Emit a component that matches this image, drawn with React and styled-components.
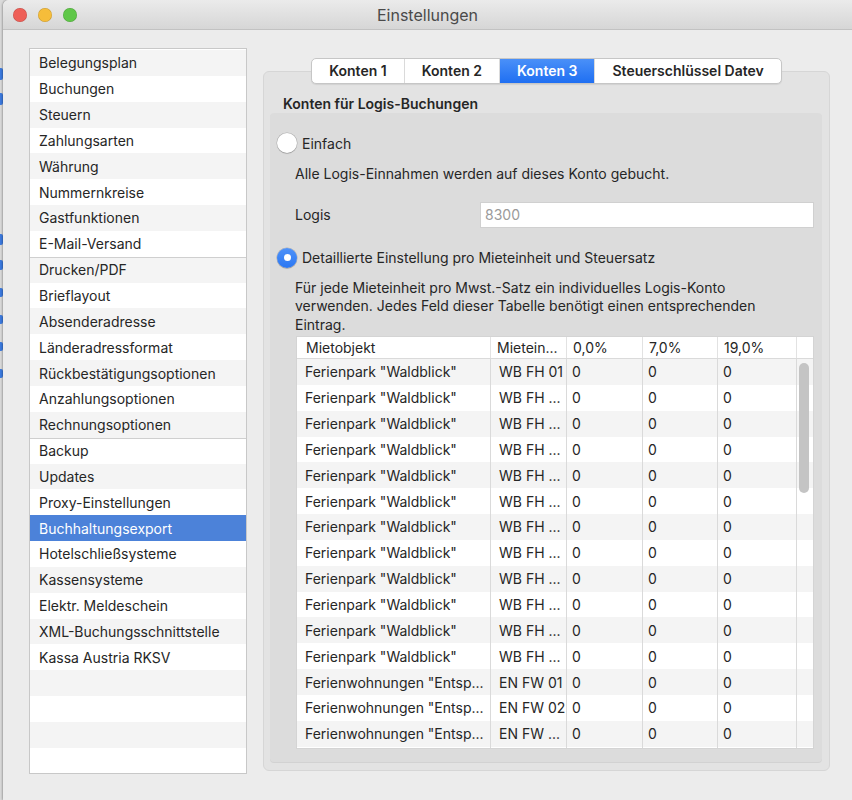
import React from "react";
import styled, { createGlobalStyle } from "styled-components";

const GlobalStyle = createGlobalStyle`
  html, body {
    margin: 0;
    padding: 0;
  }
  body {
    width: 852px;
    height: 800px;
    overflow: hidden;
    background: #d6d6d6;
    font-family: Inter, "Noto Sans", "Liberation Sans", sans-serif;
    font-size: 14px;
    color: #262626;
  }
`;

const Screen = styled.div`
  display: flex;
  height: 800px;
`;

// window behind, only a sliver is visible
const Backdrop = styled.div`
  width: 3px;
  display: flex;
  flex-direction: column;
  background: #dadada;
`;

const Mark = styled.div`
  height: ${(p) => p.$h}px;
  margin-top: ${(p) => p.$top}px;
  background: #3c7be0;
  border-radius: 0 2px 2px 0;
`;

const Window = styled.div`
  flex: 1;
  display: flex;
  flex-direction: column;
  background: #ececec;
  border-top-left-radius: 6px;
  overflow: hidden;
  box-shadow: -1px 0 2px rgba(0, 0, 0, 0.25);
`;

const TitleBar = styled.div`
  height: 30px;
  flex-shrink: 0;
  display: grid;
  grid-template-columns: 1fr auto 1fr;
  align-items: center;
  background: linear-gradient(#ebebeb, #d6d6d6);
  border-bottom: 1px solid #c2c2c2;
  box-sizing: border-box;
`;

const Lights = styled.div`
  display: flex;
  gap: 11px;
  padding-left: 10px;
`;

const Light = styled.span`
  width: 14px;
  height: 14px;
  border-radius: 50%;
  background: ${(p) => p.$color};
  box-shadow: inset 0 0 0 0.5px rgba(0, 0, 0, 0.18);
`;

const Title = styled.div`
  font-size: 16px;
  color: #4a4a4a;
`;

const Body = styled.div`
  flex: 1;
  min-height: 0;
  display: flex;
  gap: 16px;
  padding: 18px 22px 0 26px;
`;

const Sidebar = styled.div`
  width: 218px;
  height: 726px;
  box-sizing: border-box;
  border: 1px solid #c8c8c8;
  background: #fff;
  overflow: hidden;
  display: flex;
  flex-direction: column;
  padding-top: 1px;
`;

const SideItem = styled.div`
  height: 25.85px;
  flex-shrink: 0;
  display: flex;
  align-items: center;
  padding-left: 9px;
  white-space: nowrap;
  color: ${(p) => (p.$selected ? "#fff" : "#262626")};
  background: ${(p) =>
    p.$selected ? "#4c82d9" : p.$striped ? "#f4f4f4" : "#fff"};
  box-shadow: ${(p) => (p.$groupStart ? "inset 0 1px 0 #cfcfcf" : "none")};
`;

const Main = styled.div`
  flex: 1;
  min-height: 0;
  display: flex;
  flex-direction: column;
  padding: 10px 0 29px;
`;

const Tabs = styled.div`
  align-self: center;
  display: flex;
  height: 26px;
  flex-shrink: 0;
  box-sizing: border-box;
  border: 1px solid #c6c6c6;
  border-radius: 5px;
  background: #fff;
  box-shadow: 0 1px 1px rgba(0, 0, 0, 0.08);
  overflow: hidden;
  position: relative;
  z-index: 1;
`;

const Tab = styled.div`
  display: flex;
  align-items: center;
  padding: 0 17px 1px;
  font-weight: 600;
  color: ${(p) => (p.$active ? "#fff" : "#262626")};
  background: ${(p) =>
    p.$active ? "linear-gradient(#4a90f8, #1f6ff2)" : "transparent"};
  & + & {
    border-left: 1px solid #dadada;
  }
`;

const TabBox = styled.div`
  flex: 1;
  min-height: 0;
  margin-top: -13px;
  display: flex;
  flex-direction: column;
  background: #e3e3e3;
  border: 1px solid #d6d6d6;
  border-radius: 6px;
  padding: 23px 7px 8px 6px;
`;

const Heading = styled.div`
  font-weight: 600;
  line-height: 18px;
  padding-left: 13px;
`;

const Group = styled.div`
  flex: 1;
  min-height: 0;
  display: flex;
  flex-direction: column;
  background: #dcdcdc;
  border-radius: 4px;
  padding: 0 8px 13px 7px;
  box-shadow: 0 1px 0 #d2d2d2;
`;

const RadioRow = styled.label`
  display: flex;
  align-items: center;
  gap: 5px;
  height: 20px;
  margin-top: 20px;
  flex-shrink: 0;
`;

const Radio = styled.span`
  width: 20px;
  height: 20px;
  flex-shrink: 0;
  border-radius: 50%;
  display: flex;
  align-items: center;
  justify-content: center;
  background: ${(p) => (p.$checked ? "linear-gradient(#4f92f8, #2a77f3)" : "#fff")};
  box-shadow: 0 0 0 0.5px rgba(0, 0, 0, 0.22), 0 1px 1px rgba(0, 0, 0, 0.12);
  &::after {
    content: "";
    display: ${(p) => (p.$checked ? "block" : "none")};
    width: 7px;
    height: 7px;
    border-radius: 50%;
    background: #fff;
  }
`;

const Text = styled.div`
  line-height: 18.5px;
  padding-left: 18px;
  max-width: 480px;
  flex-shrink: 0;
  margin-top: ${(p) => p.$top}px;
`;

const FieldRow = styled.div`
  display: flex;
  align-items: center;
  flex-shrink: 0;
  margin-top: 18px;
  padding-left: 18px;
`;

const FieldLabel = styled.span`
  width: 185px;
`;

const Input = styled.div`
  flex: 1;
  height: 26px;
  box-sizing: border-box;
  display: flex;
  align-items: center;
  padding-left: 4px;
  background: #fff;
  border: 1px solid #d0d0d0;
  color: #9a9a9a;
`;

const Table = styled.div`
  flex: 1;
  min-height: 0;
  margin: 2px 0 0 19px;
  display: flex;
  flex-direction: column;
  background: #fff;
  border: 1px solid #d4d4d4;
  overflow: hidden;
`;

const cols = "193px 76px 76px 75px 79px 1fr";

const HeadRow = styled.div`
  display: grid;
  grid-template-columns: ${cols};
  height: 21px;
  flex-shrink: 0;
  border-bottom: 1px solid #dadada;
`;

const HeadCell = styled.div`
  display: flex;
  align-items: center;
  padding-left: ${(p) => p.$pad || 7}px;
  white-space: nowrap;
  overflow: hidden;
  & + & {
    box-shadow: inset 1px 0 0 #e2e2e2;
  }
`;

const Rows = styled.div`
  flex: 1;
  min-height: 0;
  position: relative;
  overflow: hidden;
  background: linear-gradient(
    to right,
    transparent 193px, #dadada 193px, #dadada 194px, transparent 194px,
    transparent 269px, #dadada 269px, #dadada 270px, transparent 270px,
    transparent 345px, #dadada 345px, #dadada 346px, transparent 346px,
    transparent 420px, #dadada 420px, #dadada 421px, transparent 421px,
    transparent 499px, #dadada 499px, #dadada 500px, transparent 500px
  );
`;

const Row = styled.div`
  display: grid;
  grid-template-columns: ${cols};
  height: 25.85px;
  background: ${(p) => (p.$striped ? "#f4f4f4" : "#fff")};
`;

const Cell = styled.div`
  display: flex;
  align-items: center;
  padding-left: ${(p) => p.$pad || 6}px;
  white-space: nowrap;
  overflow: hidden;
  & + & {
    box-shadow: inset 1px 0 0 #dadada;
  }
`;

const Thumb = styled.div`
  position: absolute;
  top: 4px;
  right: 4px;
  width: 10px;
  height: 130px;
  border-radius: 5px;
  background: #c4c4c4;
`;

const menu = [
  ["Belegungsplan", "Buchungen", "Steuern", "Zahlungsarten", "Währung", "Nummernkreise", "Gastfunktionen", "E-Mail-Versand"],
  ["Drucken/PDF", "Brieflayout", "Absenderadresse", "Länderadressformat", "Rückbestätigungsoptionen", "Anzahlungsoptionen", "Rechnungsoptionen"],
  ["Backup", "Updates", "Proxy-Einstellungen", "Buchhaltungsexport", "Hotelschließsysteme", "Kassensysteme", "Elektr. Meldeschein", "XML-Buchungsschnittstelle", "Kassa Austria RKSV"],
];

const rows = [
  ['Ferienpark "Waldblick"', "WB FH 01"],
  ...Array.from({ length: 11 }, () => ['Ferienpark "Waldblick"', "WB FH ..."]),
  ['Ferienwohnungen "Entsp...', "EN FW 01"],
  ['Ferienwohnungen "Entsp...', "EN FW 02"],
  ['Ferienwohnungen "Entsp...', "EN FW ..."],
];

const marks = [
  [68, 12], [13, 12], [129, 11], [15, 10], [18, 9], [18, 9], [18, 9], [18, 9],
];

const App = () => {
  const items = [];
  menu.forEach((group) =>
    group.forEach((label, i) => items.push({ label, groupStart: i === 0 && items.length > 0 }))
  );
  while (items.length < 28) items.push({ label: "" });

  return (
    <>
      <GlobalStyle />
      <Screen>
        <Backdrop>
          {marks.map(([top, h], i) => (
            <Mark key={i} $top={top} $h={h} />
          ))}
        </Backdrop>
        <Window>
          <TitleBar>
            <Lights>
              <Light $color="#ee5f57" />
              <Light $color="#f6bd3a" />
              <Light $color="#5fc748" />
            </Lights>
            <Title>Einstellungen</Title>
            <div />
          </TitleBar>
          <Body>
            <Sidebar>
              {items.map((it, i) => (
                <SideItem
                  key={i}
                  $striped={i % 2 === 0}
                  $selected={it.label === "Buchhaltungsexport"}
                  $groupStart={it.groupStart}
                >
                  {it.label}
                </SideItem>
              ))}
            </Sidebar>
            <Main>
              <Tabs>
                <Tab>Konten 1</Tab>
                <Tab>Konten 2</Tab>
                <Tab $active>Konten 3</Tab>
                <Tab>Steuerschlüssel Datev</Tab>
              </Tabs>
              <TabBox>
                <Heading>Konten für Logis-Buchungen</Heading>
                <Group>
                  <RadioRow>
                    <Radio />
                    Einfach
                  </RadioRow>
                  <Text $top={12}>Alle Logis-Einnahmen werden auf dieses Konto gebucht.</Text>
                  <FieldRow>
                    <FieldLabel>Logis</FieldLabel>
                    <Input>8300</Input>
                  </FieldRow>
                  <RadioRow>
                    <Radio $checked />
                    Detaillierte Einstellung pro Mieteinheit und Steuersatz
                  </RadioRow>
                  <Text $top={11}>
                    Für jede Mieteinheit pro Mwst.-Satz ein individuelles Logis-Konto
                    verwenden. Jedes Feld dieser Tabelle benötigt einen entsprechenden
                    Eintrag.
                  </Text>
                  <Table>
                    <HeadRow>
                      <HeadCell $pad={9}>Mietobjekt</HeadCell>
                      <HeadCell>Mietein...</HeadCell>
                      <HeadCell>0,0%</HeadCell>
                      <HeadCell>7,0%</HeadCell>
                      <HeadCell>19,0%</HeadCell>
                      <HeadCell />
                    </HeadRow>
                    <Rows>
                      {rows.map(([obj, unit], i) => (
                        <Row key={i} $striped={i % 2 === 0}>
                          <Cell $pad={8}>{obj}</Cell>
                          <Cell $pad={9}>{unit}</Cell>
                          <Cell>0</Cell>
                          <Cell>0</Cell>
                          <Cell>0</Cell>
                          <Cell />
                        </Row>
                      ))}
                      <Thumb />
                    </Rows>
                  </Table>
                </Group>
              </TabBox>
            </Main>
          </Body>
        </Window>
      </Screen>
    </>
  );
};

export default App;
